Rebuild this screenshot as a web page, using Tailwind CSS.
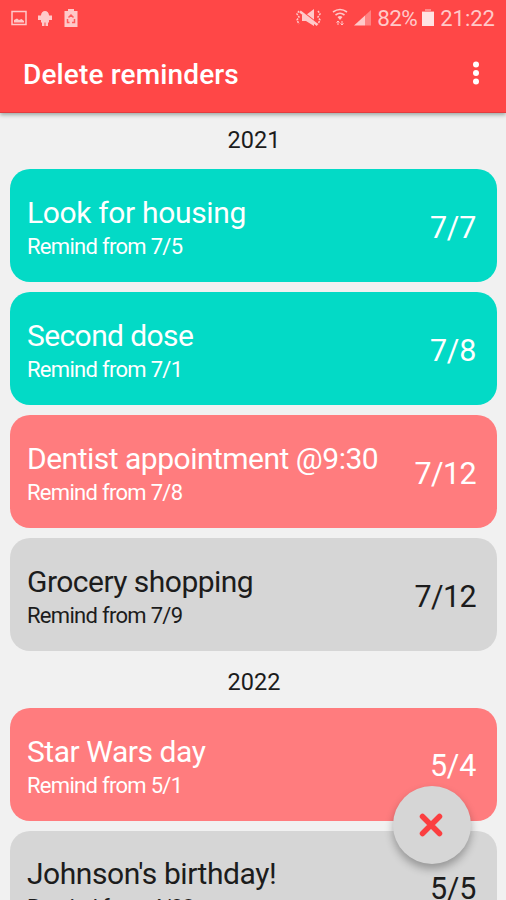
<!DOCTYPE html>
<html lang="en">

<head>
    <meta charset="UTF-8">
    <meta name="viewport" content="width=device-width, initial-scale=1.0">
    <script src="https://cdn.jsdelivr.net/npm/@tailwindcss/browser@4"></script>
    <title>Delete reminders</title>
</head>

<body class="bg-[#f1f1f1] font-['Roboto',sans-serif] text-[#1c1c1c]">
    <div class="relative flex flex-col h-[900px] w-[506px] overflow-hidden">

        <!-- status bar + toolbar -->
        <header class="relative z-10 h-[113px] shrink-0 bg-[#ff4747] border-b border-[#e23c3f] shadow-[0_2px_4px_rgba(0,40,30,0.35)]">
            <div class="flex items-center justify-between h-9 pl-[11px] pr-[11px] text-[#ffc9c9]">
                <div class="flex items-center gap-[10px]">
                    <svg class="w-4 h-4" viewBox="0 0 16 16" fill="none">
                        <rect x="1" y="1.5" width="14" height="13" stroke="currentColor" stroke-width="1.5" />
                        <path d="M3 12.500V10l3-1.500 2 1.500 2.500-1 2.500 2v1.500z" fill="currentColor" />
                    </svg>
                    <svg class="w-4 h-4" viewBox="0 0 16 16" fill="currentColor">
                        <path d="M4 5.500a4 4.500 0 0 1 8 0zM4 5h8v7.500H4zM1 5.500h14v4.500H1zM5 12h2.500v4H5zM8.500 12H11v4H8.500z" />
                    </svg>
                    <svg class="w-4 h-5" viewBox="0 0 16 20">
                        <path d="M5 1h6v2h3.500v16h-13V3H5z" fill="currentColor" />
                        <path d="M5.500 9.500L8 7l2.500 2.500M11.500 11v3.500H9M6.500 14.500h-2V11" fill="none" stroke="#ff5c5c" stroke-width="1.500" />
                    </svg>
                </div>
                <div class="flex items-center">
                    <svg class="w-[26px] h-5 mr-[10px]" viewBox="0 0 26 20">
                        <path d="M6 7h4l8-6v17L10 13H6z" fill="currentColor" />
                        <path d="M4 2l18 14" stroke="#ff4747" stroke-width="2" />
                        <path d="M4 3.500l17.500 13.500" stroke="currentColor" stroke-width="2.400" />
                        <path d="M3 3l-2 3 2 3-2 3 2 4M22 3l2 3-2 3 2 3-2 4" fill="none" stroke="currentColor" stroke-width="1.500" stroke-dasharray="2 1" />
                    </svg>
                    <svg class="w-4 h-5 mr-[6px]" viewBox="0 0 16 20" fill="none" stroke="currentColor" stroke-width="1.600">
                        <path d="M1 4q7-5 14 0M3.500 7q4.500-3.500 9 0" />
                        <path d="M5.500 9q2.500-2 5 0L8 12z" fill="currentColor" stroke="none" />
                        <path d="M6 13v4M4.500 14.500L6 13l1.500 1.500M10 13v4M8.500 15.500L10 17l1.500-1.500" stroke-width="1" />
                    </svg>
                    <svg class="w-[17px] h-5 mr-[7px]" viewBox="0 0 17 20" fill="currentColor">
                        <path d="M0 17.500L11 7.500v10z" />
                        <path d="M11 7.500L17 2v15.500h-6z" opacity="0.45" />
                    </svg>
                    <span class="text-[22.5px] leading-none w-[40px] whitespace-nowrap tracking-[-0.6px] -ml-px mr-px">82%</span>
                    <svg class="w-3 h-[18px] mr-[6px] ml-[4px]" viewBox="0 0 12 18">
                        <path d="M3 0h6v2h3v15H0V2h3z" fill="currentColor" opacity="0.5" />
                        <path d="M0 3h12v14H0z" fill="#ffe3e3" />
                    </svg>
                    <span class="text-[22px] leading-none whitespace-nowrap pt-0.5">21:22</span>
                </div>
            </div>
            <div class="flex items-center justify-between h-[77px] pl-[23px] pr-[26px]">
                <h1 class="text-[28px] leading-none font-medium text-white tracking-[0.15px]">Delete reminders</h1>
                <svg class="w-2 h-6 -mt-1" viewBox="0 0 8 24" fill="white">
                    <circle cx="4" cy="3.500" r="3" />
                    <circle cx="4" cy="12" r="3" />
                    <circle cx="4" cy="20.500" r="3" />
                </svg>
            </div>
        </header>

        <main class="flex flex-col pl-[10px] pr-[9px]">
            <h2 class="h-[56px] pt-[15px] pl-px text-[23.5px] leading-6 text-center">2021</h2>
            <div class="flex flex-col gap-[10px]">
                <div class="flex items-center justify-between h-[113px] rounded-[20px] bg-[#03dac6] pl-[17px] pr-[21px] pt-[7px] text-white">
                    <div>
                        <p class="text-[30px] leading-9 tracking-[-0.35px]">Look for housing</p>
                        <p class="text-[22px] leading-8 tracking-[-0.7px]">Remind from 7/5</p>
                    </div>
                    <span class="text-[30.5px] tracking-[-0.3px] pb-[3px]">7/7</span>
                </div>
                <div class="flex items-center justify-between h-[113px] rounded-[20px] bg-[#03dac6] pl-[17px] pr-[21px] pt-[7px] text-white">
                    <div>
                        <p class="text-[30px] leading-9 tracking-[-0.6px]">Second dose</p>
                        <p class="text-[22px] leading-8 tracking-[-0.7px]">Remind from 7/1</p>
                    </div>
                    <span class="text-[30.5px] tracking-[-0.3px] pb-[3px]">7/8</span>
                </div>
                <div class="flex items-center justify-between h-[113px] rounded-[20px] bg-[#ff7c7e] pl-[17px] pr-[21px] pt-[7px] text-white">
                    <div>
                        <p class="text-[30px] leading-9 tracking-[-0.5px]">Dentist appointment @9:30</p>
                        <p class="text-[22px] leading-8 tracking-[-0.7px]">Remind from 7/8</p>
                    </div>
                    <span class="text-[30.5px] tracking-[-0.6px] pb-[3px]">7/12</span>
                </div>
                <div class="flex items-center justify-between h-[113px] rounded-[20px] bg-[#d6d6d6] pl-[17px] pr-[21px] pt-[7px]">
                    <div>
                        <p class="text-[30px] leading-9 tracking-[-0.53px]">Grocery shopping</p>
                        <p class="text-[22px] leading-8 tracking-[-0.7px]">Remind from 7/9</p>
                    </div>
                    <span class="text-[30.5px] tracking-[-0.6px] pb-[3px]">7/12</span>
                </div>
            </div>

            <h2 class="h-[57px] pt-[19px] pl-px text-[23.5px] leading-6 text-center">2022</h2>
            <div class="flex flex-col gap-[10px]">
                <div class="flex items-center justify-between h-[113px] rounded-[20px] bg-[#ff7c7e] pl-[17px] pr-[21px] pt-[6px] text-white">
                    <div>
                        <p class="text-[30px] leading-9 tracking-[-0.45px]">Star Wars day</p>
                        <p class="text-[22px] leading-8 tracking-[-0.7px]">Remind from 5/1</p>
                    </div>
                    <span class="text-[30.5px] tracking-[-0.3px] pb-[4px]">5/4</span>
                </div>
                <div class="flex items-center justify-between h-[113px] rounded-[20px] bg-[#d6d6d6] pl-[17px] pr-[21px] pt-[4px]">
                    <div>
                        <p class="text-[30px] leading-9 tracking-[-0.45px]">Johnson's birthday!</p>
                        <p class="text-[22px] leading-8 tracking-[-0.7px]">Remind from 4/28</p>
                    </div>
                    <span class="text-[30.5px] tracking-[-0.3px] pb-[2px]">5/5</span>
                </div>
            </div>
        </main>

        <!-- floating delete button -->
        <button class="absolute left-[393px] top-[786px] w-[78px] h-[78px] rounded-full bg-[#d6d6d6] flex items-center justify-center shadow-[0_5px_9px_rgba(0,0,0,0.3)]">
            <svg class="w-6 h-6 -ml-0.5" viewBox="0 0 24 24" fill="none" stroke="#fb3f41" stroke-width="5.500" stroke-linecap="round">
                <path d="M3.500 3.500l17 17M20.500 3.500l-17 17" />
            </svg>
        </button>
    </div>
</body>

</html>
